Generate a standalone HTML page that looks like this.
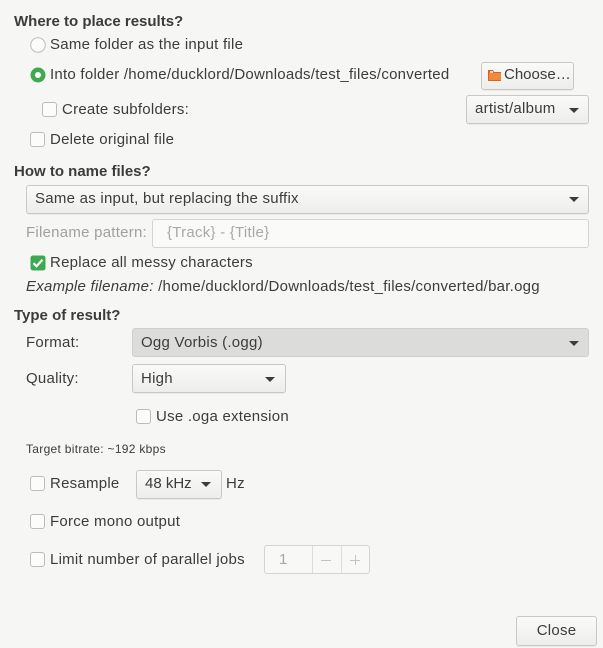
<!DOCTYPE html>
<html><head><meta charset="utf-8">
<style>
html,body{margin:0;padding:0}
body{width:603px;height:648px;background:#f6f6f5;position:relative;overflow:hidden;font-family:"Liberation Sans",sans-serif;font-size:15px;letter-spacing:.25px;color:#3c3c3c}
.a{position:absolute;white-space:nowrap}
.t{line-height:20px}
.b{font-weight:bold;letter-spacing:0}
.btn{position:absolute;box-sizing:border-box;border:1px solid #c8c8c5;border-radius:3px;background:linear-gradient(#fafaf9,#ededeb);box-shadow:0 1px 0 rgba(0,0,0,.05)}
.cb{position:absolute;width:15px;height:15px;box-sizing:border-box;border:1px solid #bcbcb8;border-radius:3px;background:#fcfcfc}
.arrow{position:absolute;width:0;height:0;border-left:5px solid transparent;border-right:5px solid transparent;border-top:5px solid #3c3c3c}
.lbl{position:absolute;line-height:20px;white-space:nowrap}
</style></head><body>

<div class="a t b" style="left:14px;top:12px">Where to place results?</div>

<svg class="a" style="left:30px;top:37px" width="16" height="16"><circle cx="8" cy="8" r="7.3" fill="#fcfcfc" stroke="#bcbcb8"/></svg>
<div class="lbl" style="left:50px;top:35px">Same folder as the input file</div>

<svg class="a" style="left:30px;top:67px" width="16" height="16"><circle cx="8" cy="8" r="7.5" fill="#3eaa4f"/><circle cx="8" cy="8" r="3" fill="#fff"/></svg>
<div class="lbl" style="left:50px;top:65px">Into folder /home/ducklord/Downloads/test_files/converted</div>

<div class="btn" style="left:481px;top:62px;width:93px;height:28px"></div>
<svg class="a" style="left:487px;top:67px" width="16" height="16"><path d="M1 3h5l1 2h7v9H1z" fill="#e06020"/><path d="M2 6h12v7H2z" fill="#f08a3c"/><path d="M3 4h3v2H3z" fill="#fff" opacity=".7"/></svg>
<div class="lbl" style="left:504px;top:65px;letter-spacing:0">Choose…</div>

<div class="cb" style="left:42px;top:102px"></div>
<div class="lbl" style="left:62px;top:100px">Create subfolders:</div>
<div class="btn" style="left:466px;top:95px;width:123px;height:29px"></div>
<div class="lbl" style="left:475px;top:99px">artist/album</div>
<div class="arrow" style="left:569px;top:108px"></div>

<div class="cb" style="left:30px;top:132px"></div>
<div class="lbl" style="left:50px;top:130px">Delete original file</div>

<div class="a t b" style="left:14px;top:162px">How to name files?</div>
<div class="btn" style="left:26px;top:185px;width:563px;height:29px"></div>
<div class="lbl" style="left:35px;top:189px">Same as input, but replacing the suffix</div>
<div class="arrow" style="left:569px;top:197px"></div>

<div class="lbl" style="left:26px;top:223px;color:#a0a09c">Filename pattern:</div>
<div class="a" style="left:152px;top:219px;width:437px;height:29px;box-sizing:border-box;border:1px solid #d4d4d0;border-radius:3px;background:#fafaf9"></div>
<div class="lbl" style="left:167px;top:223px;color:#a8a8a4">{Track} - {Title}</div>

<svg class="a" style="left:30px;top:255px" width="16" height="16"><rect x="0.5" y="0.5" width="15" height="15" rx="2.5" fill="#3eaa4f"/><path d="M3.5 8.2l3 3 6-6.5" stroke="#fff" stroke-width="2.2" fill="none"/></svg>
<div class="lbl" style="left:50px;top:253px">Replace all messy characters</div>

<div class="lbl" style="left:26px;top:277px"><i>Example filename:</i> /home/ducklord/Downloads/test_files/converted/bar.ogg</div>

<div class="a t b" style="left:14px;top:306px">Type of result?</div>

<div class="lbl" style="left:26px;top:333px">Format:</div>
<div class="a" style="left:132px;top:328px;width:457px;height:29px;box-sizing:border-box;border:1px solid #cfcfcc;border-radius:3px;background:#dcdcda"></div>
<div class="lbl" style="left:141px;top:333px">Ogg Vorbis (.ogg)</div>
<div class="arrow" style="left:569px;top:341px"></div>

<div class="lbl" style="left:26px;top:369px">Quality:</div>
<div class="btn" style="left:132px;top:364px;width:154px;height:29px"></div>
<div class="lbl" style="left:141px;top:369px">High</div>
<div class="arrow" style="left:265px;top:377px"></div>

<div class="cb" style="left:136px;top:409px"></div>
<div class="lbl" style="left:156px;top:407px">Use .oga extension</div>

<div class="a" style="left:26px;top:442px;font-size:12px;letter-spacing:.3px;line-height:15px">Target bitrate: ~192 kbps</div>

<div class="cb" style="left:30px;top:476px"></div>
<div class="lbl" style="left:50px;top:474px">Resample</div>
<div class="btn" style="left:136px;top:470px;width:86px;height:29px"></div>
<div class="lbl" style="left:145px;top:474px;letter-spacing:0">48 kHz</div>
<div class="arrow" style="left:201px;top:482px"></div>
<div class="lbl" style="left:226px;top:474px">Hz</div>

<div class="cb" style="left:30px;top:514px"></div>
<div class="lbl" style="left:50px;top:512px">Force mono output</div>

<div class="cb" style="left:30px;top:552px"></div>
<div class="lbl" style="left:50px;top:550px">Limit number of parallel jobs</div>
<div class="a" style="left:264px;top:545px;width:106px;height:29px;box-sizing:border-box;border:1px solid #d4d4d0;border-radius:3px;background:#f8f8f7"></div>
<div class="a" style="left:312px;top:546px;width:1px;height:27px;background:#dcdcd8"></div>
<div class="a" style="left:341px;top:546px;width:1px;height:27px;background:#dcdcd8"></div>
<div class="lbl" style="left:279px;top:550px;color:#a8a8a4">1</div>
<div class="a" style="left:321px;top:560px;width:10px;height:1px;background:#c4c4c0"></div>
<div class="a" style="left:350px;top:560px;width:10px;height:1px;background:#c4c4c0"></div>
<div class="a" style="left:355px;top:555px;width:1px;height:10px;background:#c4c4c0"></div>

<div class="btn" style="left:516px;top:616px;width:81px;height:30px"></div>
<div class="lbl" style="left:516px;top:621px;width:81px;text-align:center">Close</div>

</body></html>
